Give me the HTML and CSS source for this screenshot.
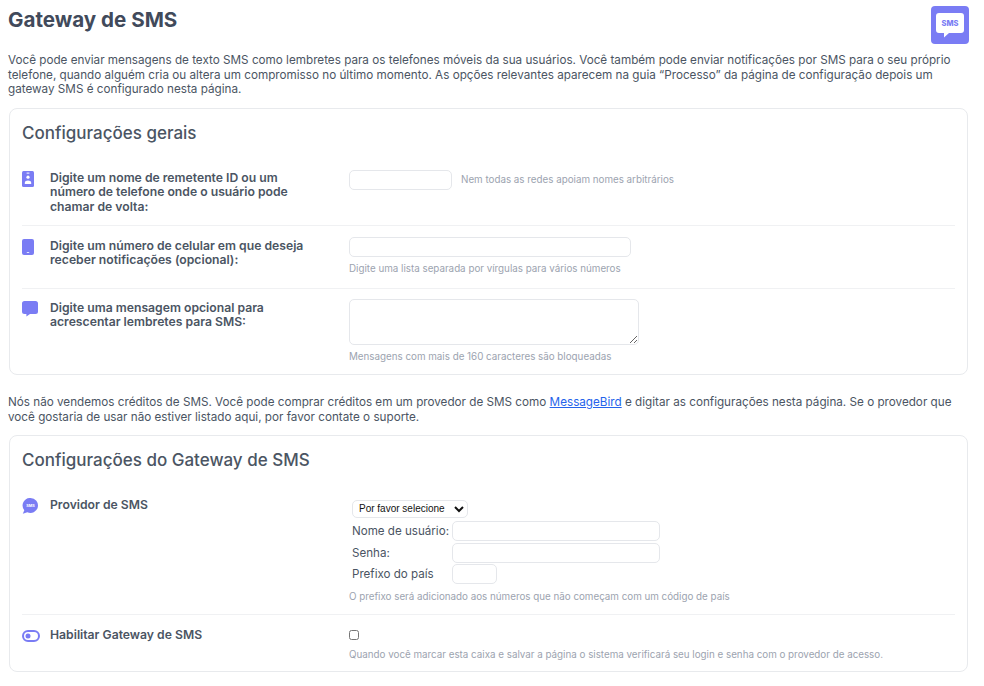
FILE: index.html
```html
<!DOCTYPE html>
<html lang="pt">
<head>
<meta charset="utf-8">
<title>Gateway de SMS</title>
<link rel="stylesheet" href="styles.css">
</head>
<body>
<header class="page-head">
  <h1>Gateway de SMS</h1>
  <svg class="logo" viewBox="0 0 38 38" aria-hidden="true">
    <rect width="38" height="38" rx="4" fill="#7a7cf4"/>
    <path d="M8 7h22a3 3 0 0 1 3 3v14a3 3 0 0 1-3 3H18l-5 4.500V27H8a3 3 0 0 1-3-3V10a3 3 0 0 1 3-3z" fill="#fff"/>
    <text x="19" y="20" class="logo-text" text-anchor="middle">SMS</text>
  </svg>
</header>
<p class="intro">Você pode enviar mensagens de texto SMS como lembretes para os telefones móveis da sua usuários. Você também pode enviar notificações por SMS para o seu próprio telefone, quando alguém cria ou altera um compromisso no último momento. As opções relevantes aparecem na guia “Processo” da página de configuração depois um gateway SMS é configurado nesta página.</p>

<section class="card card-general">
  <h2>Configurações gerais</h2>
  <div class="row row-sender">
    <svg class="icon" viewBox="0 0 12 16" aria-hidden="true"><rect width="12" height="16" rx="1.5" fill="#7a7cf4"/><circle cx="6" cy="6.200" r="1.600" fill="#fff"/><rect x="4.600" y="1.600" width="2.800" height="1" fill="#fff"/><path d="M2.800 13v-1.200c0-1.400 1.400-2.200 3.200-2.200s3.200.8 3.200 2.200V13z" fill="#fff"/></svg>
    <label class="label">Digite um nome de remetente ID ou um número de telefone onde o usuário pode chamar de volta:</label>
    <div class="field field-inline">
      <input class="input w-103" type="text">
      <span class="hint">Nem todas as redes apoiam nomes arbitrários</span>
    </div>
  </div>
  <div class="row row-mobile">
    <svg class="icon" viewBox="0 0 12 16" aria-hidden="true"><rect width="12" height="16" rx="2" fill="#7a7cf4"/><rect x="4.800" y="13.200" width="2.400" height="0.800" fill="#fff"/></svg>
    <label class="label">Digite um número de celular em que deseja receber notificações (opcional):</label>
    <div class="field">
      <input class="input w-282" type="text">
      <span class="hint hint-below">Digite uma lista separada por vírgulas para vários números</span>
    </div>
  </div>
  <div class="row row-message">
    <svg class="icon icon-wide" viewBox="0 0 16 16" aria-hidden="true"><path d="M2.500 0h11A2.500 2.500 0 0 1 16 2.500v8a2.500 2.500 0 0 1-2.500 2.500H8l-3.600 2.600V13H2.500A2.500 2.500 0 0 1 0 10.500v-8A2.500 2.500 0 0 1 2.500 0z" fill="#7a7cf4"/></svg>
    <label class="label">Digite uma mensagem opcional para acrescentar lembretes para SMS:</label>
    <div class="field">
      <textarea class="input textarea"></textarea>
      <span class="hint hint-below">Mensagens com mais de 160 caracteres são bloqueadas</span>
    </div>
  </div>
</section>

<p class="note">Nós não vendemos créditos de SMS. Você pode comprar créditos em um provedor de SMS como <a href="#">MessageBird</a> e digitar as configurações nesta página. Se o provedor que você gostaria de usar não estiver listado aqui, por favor contate o suporte.</p>

<section class="card card-gateway">
  <h2>Configurações do Gateway de SMS</h2>
  <div class="row row-provider">
    <svg class="icon icon-wide" viewBox="0 0 16 16" aria-hidden="true"><path d="M8.500 0a7.500 7.500 0 1 1-3.200 14.300L.8 15.800l1.500-3.600A7.500 7.500 0 0 1 8.500 0z" fill="#7a7cf4"/><text x="8.500" y="9.300" class="icon-text" text-anchor="middle">SMS</text></svg>
    <label class="label">Providor de SMS</label>
    <div class="field">
      <select class="select"><option>Por favor selecione</option></select>
      <div class="cred"><span>Nome de usuário:</span><input class="input w-208" type="text"></div>
      <div class="cred"><span>Senha:</span><input class="input w-208" type="text"></div>
      <div class="cred"><span>Prefixo do país</span><input class="input w-45" type="text"></div>
      <span class="hint hint-prefix">O prefixo será adicionado aos números que não começam com um código de país</span>
    </div>
  </div>
  <div class="row row-enable">
    <svg class="icon icon-toggle" viewBox="0 0 18 12" aria-hidden="true"><rect x="1" y="1" width="16" height="10" rx="5" fill="none" stroke="#7a7cf4" stroke-width="2"/><circle cx="6" cy="6" r="2.500" fill="#7a7cf4"/></svg>
    <label class="label">Habilitar Gateway de SMS</label>
    <div class="field">
      <input class="check" type="checkbox">
      <span class="hint hint-check">Quando você marcar esta caixa e salvar a página o sistema verificará seu login e senha com o provedor de acesso.</span>
    </div>
  </div>
</section>
</body>
</html>
```
FILE: styles.css
```css
* { box-sizing: border-box; }
html, body { margin: 0; }
body {
  padding: 8px 16px 0 8px;
  background: #fff;
  color: #4b5563;
  font-family: Inter, "Liberation Sans", sans-serif;
  font-size: 11.700px;
  line-height: 14.500px;
}
.page-head { display: flex; justify-content: space-between; align-items: flex-start; height: 45px; }
h1 { margin: 0; font-size: 20.600px; line-height: 24px; font-weight: 700; color: #414a5b; }
.logo { width: 38px; height: 38px; margin: -2px -1px 0 0; flex: none; }
.logo-text { font: 800 7.500px Inter, sans-serif; fill: #7a7cf4; }
.intro { margin: 0 0 11px; }
.note { margin: 20px 0 10px; line-height: 15px; }
.note a { color: #2563eb; }
.card { margin-left: 1px; border: 1px solid #e8eaed; border-radius: 8px; padding: 12px 12px 0; }
h2 { margin: 0; font-size: 17px; line-height: 24px; font-weight: 500; color: #4b5563; }
.card-general { height: 267px; }
.card-gateway { height: 237px; }
.row { display: flex; align-items: flex-start; border-bottom: 1px solid #f0f1f3; }
.row:last-child { border-bottom: 0; }
.row-sender { margin-top: 16px; height: 65px; padding-top: 10px; }
.row-mobile { height: 63px; padding-top: 13px; }
.row-message { height: 80px; padding-top: 12px; }
.row-provider { margin-top: 19px; height: 124px; padding-top: 7px; }
.row-enable { padding-top: 13px; }
.icon { width: 12px; height: 16px; flex: none; margin-right: 16px; }
.icon-wide { width: 16px; height: 16px; margin-right: 12px; }
.icon-toggle { width: 18px; height: 12px; margin: 2px 10px 0 0; }
.icon-text { font: 700 3.800px Inter, sans-serif; fill: #fff; }
.label { flex: none; width: 299px; padding-right: 30px; font-size: 12.200px; font-weight: 600; color: #4b5563; }
.field { flex: 1; min-width: 0; display: flex; flex-direction: column; align-items: flex-start; }
.field-inline { flex-direction: row; align-items: center; gap: 9px; }
.input { display: block; height: 20px; margin: 0; padding: 2px 6px; border: 1px solid #e5e7eb; border-radius: 5px; background: #fff; }
.row-sender .field { margin-top: -1px; }
.row-mobile .field { margin-top: -2px; }
.row-message .field { margin-top: -2px; }
.w-103 { width: 103px; }
.w-282 { width: 282px; }
.w-208 { width: 208px; }
.w-45 { width: 45px; }
.textarea { width: 290px; height: 46px; resize: both; }
.hint { font-size: 9.800px; line-height: 14px; color: #9ca3af; }
.hint-below { margin-top: 5px; }
.hint-prefix { margin-top: 5px; }
.hint-check { margin-top: 8px; }
.select { height: 18px; width: 116px; margin: 2px 0 3px 3px; padding-left: 2px; border: 1px solid #e5e7eb; border-radius: 5px; background: #fff; color: #111; font: 10px "Liberation Sans", sans-serif; }
.cred { display: flex; align-items: center; height: 21.500px; padding-left: 3px; font-size: 11.600px; white-space: nowrap; }
.cred span { width: 100px; flex: none; }
.check { width: 10px; height: 10px; margin: 2px 0 0; }
```
